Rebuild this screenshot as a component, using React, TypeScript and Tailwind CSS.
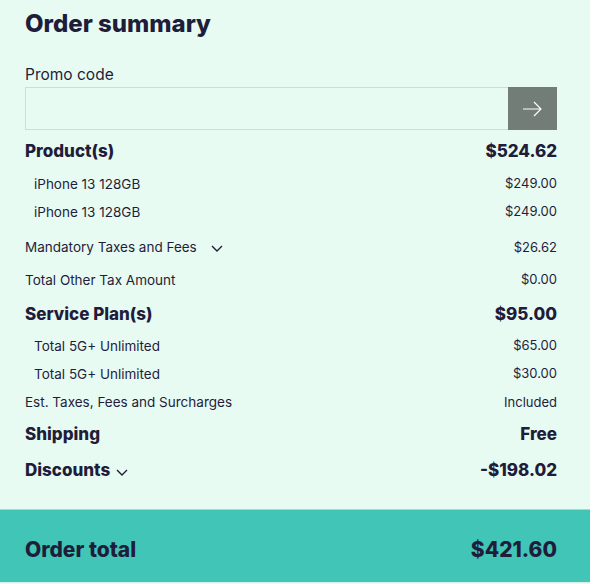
import React from 'react';

const font = { fontFamily: 'Inter, "Noto Sans", sans-serif' };

const Chevron = ({ className = '' }: { className?: string }) => (
  <svg width="12" height="7" viewBox="0 0 12 7" fill="none" className={className}>
    <path d="M1 1l5 5 5-5" stroke="#1f1d3a" strokeWidth="1.4" />
  </svg>
);

type Row = {
  label: string;
  value: string;
  kind: 'head' | 'item' | 'line';
  h: string;
  chevron?: 'wide' | 'tight';
};

const rows: Row[] = [
  { label: 'Product(s)', value: '$524.62', kind: 'head', h: 'h-[44px]' },
  { label: 'iPhone 13 128GB', value: '$249.00', kind: 'item', h: 'h-[20px]' },
  { label: 'iPhone 13 128GB', value: '$249.00', kind: 'item', h: 'h-[36px]' },
  { label: 'Mandatory Taxes and Fees', value: '$26.62', kind: 'line', h: 'h-[35px]', chevron: 'wide' },
  { label: 'Total Other Tax Amount', value: '$0.00', kind: 'line', h: 'h-[30px]' },
  { label: 'Service Plan(s)', value: '$95.00', kind: 'head', h: 'h-[40px]' },
  { label: 'Total 5G+ Unlimited', value: '$65.00', kind: 'item', h: 'h-[22px]' },
  { label: 'Total 5G+ Unlimited', value: '$30.00', kind: 'item', h: 'h-[34px]' },
  { label: 'Est. Taxes, Fees and Surcharges', value: 'Included', kind: 'line', h: 'h-[23px]' },
  { label: 'Shipping', value: 'Free', kind: 'head', h: 'h-[42px]' },
  { label: 'Discounts', value: '-$198.02', kind: 'head', h: 'h-[30px]', chevron: 'tight' },
];

export default function App() {
  return (
    <div className="w-[590px] min-h-[584px] bg-[#e7fbf3] text-[#1f1d3a]" style={font}>
      <div className="pl-[25px] pr-[33px] pt-2">
        <h1 className="text-[24px] leading-[32px] font-extrabold">Order summary</h1>

        <label className="block mt-[25px] mb-[2px] text-[15.5px] leading-[20px]">Promo code</label>
        <div className="flex h-[43px]">
          <input className="flex-1 min-w-0 h-full border border-[#d6d9d7] border-r-0 bg-transparent outline-none px-3" />
          <button className="w-[49px] h-full bg-[#737d77] flex items-center justify-center">
            <svg width="19" height="16" viewBox="0 0 19 16" fill="none">
              <path d="M0 8h18M11 1l7 7-7 7" stroke="#fff" strokeWidth="1.2" />
            </svg>
          </button>
        </div>

        <div className="flex flex-col">
          {rows.map((r, i) => (
            <div key={i} className={`flex items-center justify-between ${r.h}`}>
              <div className="flex items-center">
                <span
                  className={
                    r.kind === 'head'
                      ? 'text-[17px] font-extrabold'
                      : r.kind === 'item'
                      ? 'text-[13.5px] pl-[9px]'
                      : 'text-[13.5px]'
                  }
                >
                  {r.label}
                </span>
                {r.chevron === 'wide' && <Chevron className="ml-[14px] mt-[1px]" />}
                {r.chevron === 'tight' && <Chevron className="ml-[6px] mt-[3px]" />}
              </div>
              <span className={r.kind === 'head' ? 'text-[17px] font-extrabold' : 'text-[13px]'}>{r.value}</span>
            </div>
          ))}
        </div>
      </div>

      <div className="mt-[23px] h-[74px] bg-[#40c5b7] border-t border-[#b9cfc8] border-b border-b-[#d9eee6] pl-[25px] pr-[33px] pt-[8px] flex items-center justify-between">
        <span className="text-[21px] font-extrabold">Order total</span>
        <span className="text-[21px] font-extrabold">$421.60</span>
      </div>
    </div>
  );
}
